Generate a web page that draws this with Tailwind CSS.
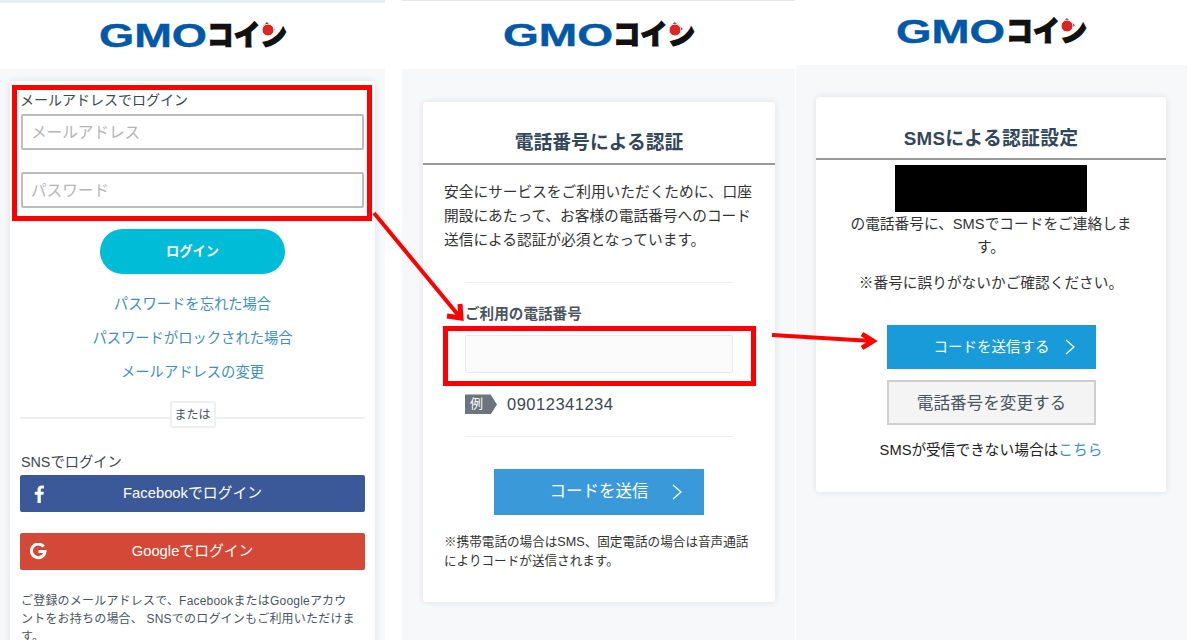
<!DOCTYPE html>
<html lang="ja">
<head>
  <meta charset="UTF-8">
  <title>GMOコイン</title>
  <script src="https://cdn.jsdelivr.net/npm/@tailwindcss/browser@4"></script>
</head>
<body class="relative w-[1200px] h-[640px] overflow-hidden bg-white text-[#2c3e50] font-['Liberation_Sans','Noto_Sans_CJK_JP',sans-serif]">
  <div class="flex h-[640px] items-start">

    <!-- login -->
    <section class="w-[385px] h-[640px] shrink-0 bg-[#f7f8fa] overflow-hidden">
      <div class="h-[3px] bg-[#e3f1f6]"></div>
      <header class="h-[66px] bg-white flex justify-center pt-[11px]">
        <svg class="w-[188px] h-[44px]" viewBox="0 0 188 44">
          <text x="0" y="33" font-family="Liberation Sans" font-weight="700" font-size="33" fill="#0058a8" stroke="#0058a8" stroke-width="0.4" textLength="108" lengthAdjust="spacingAndGlyphs">GMO</text>
          <text x="108" y="32" font-family="Noto Sans CJK JP" font-weight="900" font-size="29" fill="#111" stroke="#111" stroke-width="1.2" textLength="80" lengthAdjust="spacingAndGlyphs">コイン</text>
          <circle cx="169" cy="16" r="6" fill="#dc2626" stroke="#fff" stroke-width="1"/>
        </svg>
      </header>
      <div class="ml-[10px] mt-[12px] w-[365px] h-[600px] bg-white rounded-[3px] shadow-[0_0_6px_rgba(40,50,70,0.12)] pt-[4px]">
        <div class="mx-[2px] w-[360px] h-[136px] border-[5px] border-[#ff0000] px-[4px]">
          <p class="-ml-px text-[14px] leading-[20px] text-[#3a4754]">メールアドレスでログイン</p>
          <input class="mt-[4px] block w-[343px] h-[36px] border-2 border-[#bdbdbd] rounded-[2px] px-[8px] pt-[2px] text-[15.6px] placeholder:text-[#b5b5b5]" placeholder="メールアドレス">
          <input class="mt-[22px] block w-[343px] h-[36px] border-2 border-[#bdbdbd] rounded-[2px] px-[8px] pt-[2px] text-[15.6px] placeholder:text-[#b5b5b5]" placeholder="パスワード">
        </div>
        <div class="mt-[8px] ml-[90px] w-[185px] h-[45px] rounded-full bg-[#00bcd6] flex items-center justify-center text-white text-[13.3px] font-bold">ログイン</div>
        <div class="mt-[20px] flex flex-col items-center gap-[14px] text-[14.3px] leading-[20px] text-[#3c8fc4]">
          <a>パスワードを忘れた場合</a>
          <a>パスワードがロックされた場合</a>
          <a>メールアドレスの変更</a>
        </div>
        <div class="relative mt-[19px] mx-[10px] h-[27px] flex items-center justify-center">
          <div class="absolute inset-x-0 top-[16px] h-[2px] bg-[#efefef]"></div>
          <span class="relative w-[46px] h-[27px] bg-white border-2 border-[#efefef] rounded-[2px] flex items-center justify-center text-[12px] text-[#4a5560]">または</span>
        </div>
        <div class="mx-[10px] mt-[24px]">
          <p class="pl-px text-[14.3px] leading-[20px] text-[#3a4754]">SNSでログイン</p>
          <div class="relative mt-[3px] h-[37px] rounded-[2px] bg-[#3b5998] flex items-center justify-center text-white text-[14.8px]">
            <svg class="absolute left-[14px] top-[10px] w-[10px] h-[18px]" viewBox="0 0 10 18" fill="#fff"><path d="M6.8 18V9.8h2.6l.4-3.1h-3V4.9c0-.9.3-1.5 1.500-1.5H10V.6C9.6.5 8.800.4 7.800.4 5.300.4 3.500 1.900 3.500 4.600v2.100H.8v3.100h2.700V18z"/></svg>
            Facebookでログイン
          </div>
          <div class="relative mt-[21px] h-[37px] rounded-[2px] bg-[#d34836] flex items-center justify-center text-white text-[14.8px]">
            <svg class="absolute left-[10px] top-[10px] w-[17px] h-[17px]" viewBox="0 0 17 17" fill="none" stroke="#fff" stroke-width="3"><path d="M13.600 3.700A6.800 6.800 0 1 0 15 8.500H8.500"/></svg>
            Googleでログイン
          </div>
          <p class="mt-[22px] pl-px text-[12px] tracking-[0.2px] leading-[18px] text-[#4a5560]">ご登録のメールアドレスで、FacebookまたはGoogleアカウ<br>ントをお持ちの場合、 SNSでのログインもご利用いただけま<br>す。</p>
        </div>
      </div>
    </section>

    <!-- phone number -->
    <section class="ml-[17px] w-[393px] h-[640px] shrink-0 bg-[#f7f8fa] overflow-hidden">
      <div class="h-px bg-[#e6e6e6]"></div>
      <header class="h-[68px] bg-white flex justify-center pt-[12px]">
        <svg class="w-[192px] h-[44px]" viewBox="0 0 192 44">
          <text x="0" y="33" font-family="Liberation Sans" font-weight="700" font-size="32" fill="#0058a8" stroke="#0058a8" stroke-width="0.4" textLength="110" lengthAdjust="spacingAndGlyphs">GMO</text>
          <text x="110" y="32" font-family="Noto Sans CJK JP" font-weight="900" font-size="28" fill="#111" stroke="#111" stroke-width="1.2" textLength="82" lengthAdjust="spacingAndGlyphs">コイン</text>
          <circle cx="172" cy="17" r="6" fill="#dc2626" stroke="#fff" stroke-width="1"/>
        </svg>
      </header>
      <div class="ml-[21px] mt-[33px] w-[352px] h-[500px] bg-white rounded-[3px] shadow-[0_0_6px_rgba(40,50,70,0.12)]">
        <h2 class="h-[63px] pt-[28px] text-center text-[18.800px] leading-[26px] font-bold border-b-2 border-[#999] text-[#33475b]">電話番号による認証</h2>
        <p class="mt-[15px] px-[21px] text-[14.700px] leading-[24px] text-[#333]">安全にサービスをご利用いただくために、口座開設にあたって、お客様の電話番号へのコード送信による認証が必須となっています。</p>
        <div class="mt-[30px] mx-[42px] h-px bg-[#eee]"></div>
        <p class="mt-[21px] ml-[42px] text-[14.600px] leading-[20px] font-bold text-[#4a5560]">ご利用の電話番号</p>
        <div class="mt-[2px] ml-[20px] w-[313px] h-[60px] border-[5px] border-[#ff0000] pl-[17px] pt-[4px]">
          <input class="block w-[268px] h-[38px] bg-[#fbfbfb] border border-[#eaeaea] rounded-[2px]">
        </div>
        <div class="mt-[6px] ml-[42px] flex items-center">
          <span class="w-[32px] h-[20px] bg-[#6c757d] [clip-path:polygon(0_0,80%_0,100%_50%,80%_100%,0_100%)] text-white text-[13px] leading-[20px] pl-[5px]">例</span>
          <span class="ml-[10px] text-[16.500px] tracking-[0.5px] text-[#3a4754]">09012341234</span>
        </div>
        <div class="mt-[19px] mx-[42px] h-px bg-[#eee]"></div>
        <div class="relative mt-[32px] ml-[71px] w-[210px] h-[46px] bg-[#3a9ad9] flex items-center justify-center text-white text-[16.500px]">
          コードを送信
          <svg class="absolute left-[178px] top-[15px] w-[10px] h-[16px]" viewBox="0 0 10 16" fill="none" stroke="#fff" stroke-width="1.200"><path d="M1 1l8 7-8 7"/></svg>
        </div>
        <p class="mt-[18px] px-[21px] text-[12.600px] leading-[19px] text-[#333]">※携帯電話の場合はSMS、固定電話の場合は音声通話によりコードが送信されます。</p>
      </div>
    </section>

    <!-- sms -->
    <section class="ml-px w-[391px] h-[640px] shrink-0 bg-[#f7f8fa] overflow-hidden">
      <header class="h-[65px] bg-white flex justify-center pt-[10px]">
        <svg class="w-[191px] h-[44px]" viewBox="0 0 191 44">
          <text x="0" y="33" font-family="Liberation Sans" font-weight="700" font-size="33" fill="#0058a8" stroke="#0058a8" stroke-width="0.4" textLength="109" lengthAdjust="spacingAndGlyphs">GMO</text>
          <text x="110" y="32" font-family="Noto Sans CJK JP" font-weight="900" font-size="29" fill="#111" stroke="#111" stroke-width="1.2" textLength="81" lengthAdjust="spacingAndGlyphs">コイン</text>
          <circle cx="171" cy="16" r="6" fill="#dc2626" stroke="#fff" stroke-width="1"/>
        </svg>
      </header>
      <div class="ml-[20px] mt-[32px] w-[350px] h-[395px] bg-white rounded-[3px] shadow-[0_0_6px_rgba(40,50,70,0.12)] text-center">
        <h2 class="h-[63px] pt-[29px] text-[18.800px] tracking-[0.3px] leading-[26px] font-bold border-b-2 border-[#999] text-[#33475b]">SMSによる認証設定</h2>
        <div class="mt-[5px] mx-auto w-[192px] h-[47px] bg-black"></div>
        <p class="mt-[1px] px-[34px] text-[14.700px] leading-[23px] text-[#333]">の電話番号に、SMSでコードをご連絡します。</p>
        <p class="mt-[13px] text-[14.700px] leading-[23px] text-[#333]">※番号に誤りがないかご確認ください。</p>
        <div class="relative mt-[30px] ml-[71px] w-[209px] h-[44px] pt-px bg-[#1a9bd9] flex items-center justify-center text-white text-[14.500px]">
          コードを送信する
          <svg class="absolute left-[178px] top-[14px] w-[10px] h-[16px]" viewBox="0 0 10 16" fill="none" stroke="#fff" stroke-width="1.200"><path d="M1 1l8 7-8 7"/></svg>
        </div>
        <div class="mt-[11px] ml-[71px] w-[209px] h-[45px] pt-[4px] bg-[#f4f4f4] border-2 border-[#cfcfcf] flex items-center justify-center text-[16.600px] text-[#4a5560]">電話番号を変更する</div>
        <p class="mt-[14px] text-[14.700px] leading-[22px] text-[#222]">SMSが受信できない場合は<a class="text-[#3c8fc4]">こちら</a></p>
      </div>
    </section>
  </div>

  <!-- annotation arrows -->
  <svg class="absolute inset-0 w-[1200px] h-[640px] pointer-events-none" viewBox="0 0 1200 640" fill="none" stroke="#ff0000" stroke-width="4">
    <path d="M374 213L459 316"/>
    <path d="M447 316l14 2-1-14" stroke-width="5"/>
    <path d="M772 335L872 341"/>
    <path d="M862 334l11 7-11 7" stroke-width="5"/>
  </svg>
</body>
</html>
